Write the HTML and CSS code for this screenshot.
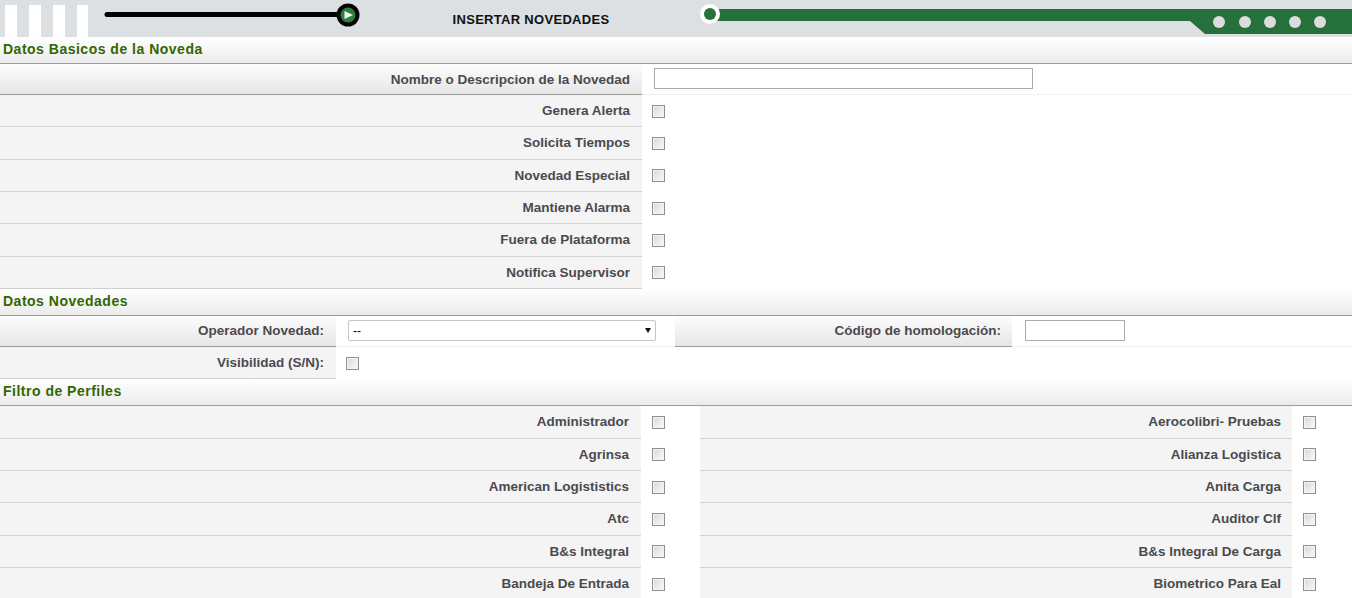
FILE: index.html
```html
<!DOCTYPE html>
<html lang="es">
<head>
<meta charset="utf-8">
<title>Insertar Novedades</title>
<link rel="stylesheet" href="styles.css">
</head>
<body>
<header class="topbar">
  <div class="stripes"><span></span><span></span><span></span><span></span></div>
  <svg class="slider" width="262" height="37" viewBox="0 0 262 37">
    <line x1="7" y1="14.5" x2="246" y2="14.5" stroke="#000" stroke-width="5" stroke-linecap="round"/>
    <circle cx="248" cy="15" r="11.5" fill="#050505"/>
    <circle cx="248" cy="15" r="7.5" fill="#2f7f3c"/>
    <polygon points="244.5,11 244.5,19 253,15" fill="#f4f4f4"/>
  </svg>
  <div class="title">INSERTAR NOVEDADES</div>
  <svg class="track" width="652" height="37" viewBox="0 0 652 37">
    <polygon points="14,9 652,9 652,34 505,34 490,21 14,21" fill="#26713b"/>
    <circle cx="10" cy="14" r="10" fill="#ffffff"/>
    <circle cx="10" cy="14" r="6" fill="#26713b"/>
    <g fill="#dcdcdc">
      <circle cx="519" cy="22" r="6"/>
      <circle cx="545" cy="22" r="6"/>
      <circle cx="570" cy="22" r="6"/>
      <circle cx="595" cy="22" r="6"/>
      <circle cx="620" cy="22" r="6"/>
    </g>
  </svg>
</header>

<section class="group basic">
  <h2 class="group-title">Datos Basicos de la Noveda</h2>
  <div class="row row-th">
    <div class="lbl">Nombre o Descripcion de la Novedad</div>
    <div class="val"><input type="text" class="txt-long"></div>
  </div>
  <div class="row"><div class="lbl">Genera Alerta</div><div class="val"><input type="checkbox" class="chk"></div></div>
  <div class="row"><div class="lbl">Solicita Tiempos</div><div class="val"><input type="checkbox" class="chk"></div></div>
  <div class="row"><div class="lbl">Novedad Especial</div><div class="val"><input type="checkbox" class="chk"></div></div>
  <div class="row"><div class="lbl">Mantiene Alarma</div><div class="val"><input type="checkbox" class="chk"></div></div>
  <div class="row"><div class="lbl">Fuera de Plataforma</div><div class="val"><input type="checkbox" class="chk"></div></div>
  <div class="row"><div class="lbl">Notifica Supervisor</div><div class="val"><input type="checkbox" class="chk"></div></div>
</section>

<section class="group novedades">
  <h2 class="group-title">Datos Novedades</h2>
  <div class="row row-th">
    <div class="lbl">Operador Novedad:</div>
    <div class="val val-mid">
      <div class="select-wrap"><select class="sel"><option>--</option></select></div>
    </div>
    <div class="lbl lbl-code">Código de homologación:</div>
    <div class="val val-code"><input type="text" class="txt-short"></div>
  </div>
  <div class="row">
    <div class="lbl">Visibilidad (S/N):</div>
    <div class="val"><input type="checkbox" class="chk"></div>
  </div>
</section>

<section class="group perfiles">
  <h2 class="group-title">Filtro de Perfiles</h2>
  <div class="row"><div class="lbl">Administrador</div><div class="val"><input type="checkbox" class="chk"></div><div class="lbl lbl-r">Aerocolibri- Pruebas</div><div class="val"><input type="checkbox" class="chk"></div></div>
  <div class="row"><div class="lbl">Agrinsa</div><div class="val"><input type="checkbox" class="chk"></div><div class="lbl lbl-r">Alianza Logistica</div><div class="val"><input type="checkbox" class="chk"></div></div>
  <div class="row"><div class="lbl">American Logististics</div><div class="val"><input type="checkbox" class="chk"></div><div class="lbl lbl-r">Anita Carga</div><div class="val"><input type="checkbox" class="chk"></div></div>
  <div class="row"><div class="lbl">Atc</div><div class="val"><input type="checkbox" class="chk"></div><div class="lbl lbl-r">Auditor Clf</div><div class="val"><input type="checkbox" class="chk"></div></div>
  <div class="row"><div class="lbl">B&amp;s Integral</div><div class="val"><input type="checkbox" class="chk"></div><div class="lbl lbl-r">B&amp;s Integral De Carga</div><div class="val"><input type="checkbox" class="chk"></div></div>
  <div class="row"><div class="lbl">Bandeja De Entrada</div><div class="val"><input type="checkbox" class="chk"></div><div class="lbl lbl-r">Biometrico Para Eal</div><div class="val"><input type="checkbox" class="chk"></div></div>
</section>
</body>
</html>
```

FILE: styles.css
```css
html, body {
  margin: 0;
  padding: 0;
  background: #ffffff;
  font-family: "Liberation Sans", Arial, sans-serif;
}

/* ---------- top bar ---------- */
.topbar {
  display: flex;
  height: 37px;
  background: #dde0e3;
}
.stripes {
  width: 100px;
  flex: none;
  display: flex;
  align-items: flex-end;
  gap: 12px;
  padding-left: 5px;
  box-sizing: border-box;
}
.stripes span {
  width: 12px;
  height: 32px;
  background: #ffffff;
}
.stripes span:last-child { width: 11px; }
.slider { flex: none; display: block; }
.title {
  width: 338px;
  flex: none;
  display: flex;
  align-items: center;
  justify-content: center;
  font-size: 13px;
  font-weight: bold;
  letter-spacing: 0.3px;
  color: #111111;
  padding-top: 1px;
  box-sizing: border-box;
}
.track { flex: 1; display: block; }

/* ---------- groups ---------- */
.group-title {
  margin: 0;
  height: 27px;
  box-sizing: border-box;
  line-height: 25px;
  padding-left: 3px;
  font-size: 14px;
  font-weight: bold;
  letter-spacing: 0.5px;
  color: #336600;
  background: linear-gradient(#ffffff, #ebebeb);
  border-bottom: 1px solid #9c9c9c;
}

.row {
  display: flex;
  height: 32.33px;
  box-sizing: border-box;
}
.lbl {
  display: flex;
  align-items: center;
  justify-content: flex-end;
  padding-right: 12px;
  box-sizing: border-box;
  background: #f4f4f4;
  border-bottom: 1px solid #d2d2d2;
  font-size: 13.5px;
  font-weight: bold;
  letter-spacing: 0;
  color: #4a4a4f;
  flex: none;
}
.val {
  display: flex;
  align-items: center;
  box-sizing: border-box;
  background: #ffffff;
  flex: 1;
}

.row-th { height: 31px; }
.row-th .lbl {
  background: linear-gradient(#fdfdfd, #e6e6e6);
  border-bottom: 1px solid #9c9c9c;
}
.row-th .val { border-bottom: 1px solid #f0f0f0; }

/* basic section */
.basic .lbl { width: 642px; }
.basic .val { padding-left: 10px; }
.basic .row-th .val { padding-left: 12px; padding-bottom: 2px; }

/* novedades section */
.novedades .lbl { width: 336px; }
.novedades .val { padding-left: 10px; }
.novedades .val-mid { flex: none; width: 339px; padding-left: 12px; }
.novedades .lbl-code { width: 337px; padding-right: 11px; }
.novedades .val-code { padding-left: 13px; }

/* perfiles section */
.perfiles .lbl { width: 641px; }
.perfiles .lbl-r { width: 592px; padding-right: 11px; }
.perfiles .val { flex: none; width: 59px; padding-left: 11px; }
.perfiles .val:last-child { width: 60px; }

/* ---------- controls ---------- */
.txt-long,
.txt-short {
  margin: 0;
  height: 21px;
  box-sizing: border-box;
  border: 1px solid #ababab;
  background: #ffffff;
  font-family: "Liberation Sans", Arial, sans-serif;
  font-size: 12px;
  padding: 0 3px;
}
.txt-long { width: 379px; }
.txt-short { width: 100px; height: 21px; }

.chk {
  -webkit-appearance: none;
  appearance: none;
  margin: 0;
  width: 13px;
  height: 13px;
  box-sizing: border-box;
  border: 1px solid #8f8f8f;
  background: linear-gradient(135deg, #d6d6d6 0%, #ececec 55%, #fafafa 100%);
  box-shadow: inset 0 0 0 1px #f4f4f4;
}

.select-wrap {
  position: relative;
  width: 308px;
  height: 21px;
}
.sel {
  -webkit-appearance: none;
  appearance: none;
  margin: 0;
  width: 308px;
  height: 21px;
  box-sizing: border-box;
  border: 1px solid #c6c6c6;
  border-radius: 2px;
  background: #ffffff;
  font-family: "Liberation Sans", Arial, sans-serif;
  font-size: 12px;
  color: #000000;
  padding: 0 0 0 4px;
}
.select-wrap::after {
  content: "";
  position: absolute;
  right: 5px;
  top: 8px;
  border-left: 3.5px solid transparent;
  border-right: 3.5px solid transparent;
  border-top: 5px solid #111111;
  pointer-events: none;
}
```
